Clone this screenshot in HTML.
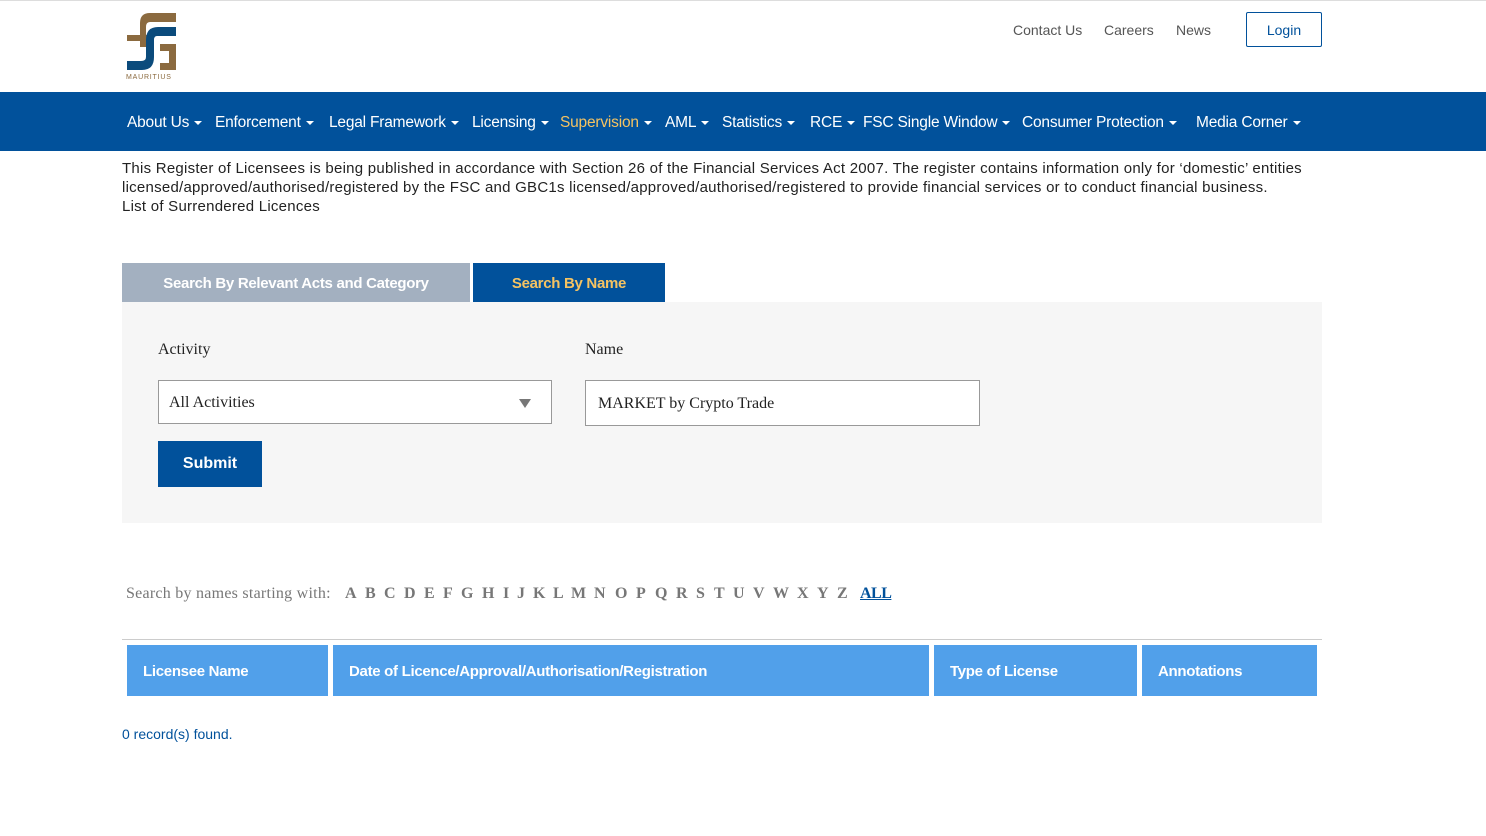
<!DOCTYPE html>
<html><head><meta charset="utf-8"><style>
*{box-sizing:border-box;margin:0;padding:0}
body{width:1486px;height:836px;background:#fff;font-family:"Liberation Sans",sans-serif;position:relative;overflow:hidden;color:#222}
.abs{position:absolute}
.top{border-top:1px solid #ddd;height:92px}
.tl{position:absolute;top:22px;font-size:14px;color:#555}
.nav{position:absolute;top:92px;left:0;width:1486px;height:59px;background:#01519b}
.nav span{position:absolute;top:22px;font-size:15.5px;color:#fff;white-space:nowrap;letter-spacing:-0.2px}
.nav span i{display:inline-block;width:0;height:0;border-left:4px solid transparent;border-right:4px solid transparent;border-top:4px solid #fff;margin-left:5px;vertical-align:middle}
.intro{left:122px;top:159px;font-size:15px;line-height:19px;color:#222;letter-spacing:0.25px}
.tab{position:absolute;top:263px;height:39px;color:#fff;font-weight:bold;font-size:15px;text-align:center;line-height:41px;letter-spacing:-0.3px}
.panel{left:122px;top:302px;width:1200px;height:221px;background:#f6f6f6}
.serif{font-family:"Liberation Serif",serif}
.th{position:absolute;top:645px;height:51px;background:#51a0ea;color:#fff;font-weight:bold;font-size:15px;line-height:53px;padding-left:16px;letter-spacing:-0.3px}
.lt{position:absolute;top:585px;font-size:16px;font-weight:bold;color:#777;font-family:"Liberation Serif",serif}
</style></head><body>
<div class="top"></div>
<svg class="abs" style="left:126px;top:13px" width="52" height="68" viewBox="0 0 52 68">
<path d="M14 0H50V9H24Q20 9 20 14V22H28V28H20V34H14V28H1V22H14V10Q14 0 24 0Z" fill="#8b6a3f"/>
<path d="M50 14V23H31Q28 23 28 27V44Q28 57 16 57H1V48H15Q20 48 20 44V27Q20 14 32 14Z" fill="#0b4b7c"/>
<path d="M34 31H50V57H34V50H43V38H34Z" fill="#8b6a3f"/>
<text x="0" y="66" font-size="7" fill="#8b6a3f" font-family="Liberation Sans" letter-spacing="0.8">MAURITIUS</text>
</svg>
<div class="tl" style="left:1013px">Contact Us</div>
<div class="tl" style="left:1104px">Careers</div>
<div class="tl" style="left:1176px">News</div>
<div class="abs" style="left:1246px;top:12px;width:76px;height:35px;border:1px solid #01519b;border-radius:2px;font-size:14px;color:#01519b;text-align:center;line-height:35px">Login</div>
<div class="nav">
<span style="left:127px">About Us<i></i></span>
<span style="left:215px">Enforcement<i></i></span>
<span style="left:329px">Legal Framework<i></i></span>
<span style="left:472px">Licensing<i></i></span>
<span style="left:560px;color:#f5c362">Supervision<i></i></span>
<span style="left:665px">AML<i></i></span>
<span style="left:722px">Statistics<i></i></span>
<span style="left:810px">RCE<i></i></span>
<span style="left:863px">FSC Single Window<i></i></span>
<span style="left:1022px">Consumer Protection<i></i></span>
<span style="left:1196px">Media Corner<i></i></span>
</div>
<div class="abs intro">This Register of Licensees is being published in accordance with Section 26 of the Financial Services Act 2007. The register contains information only for ‘domestic’ entities<br>licensed/approved/authorised/registered by the FSC and GBC1s licensed/approved/authorised/registered to provide financial services or to conduct financial business.<br>List of Surrendered Licences</div>
<div class="tab" style="left:122px;width:348px;background:#a3b0c0">Search By Relevant Acts and Category</div>
<div class="tab" style="left:473px;width:192px;background:#01519b;color:#f5c362">Search By Name</div>
<div class="abs panel"></div>
<div class="abs serif" style="left:158px;top:341px;font-size:16px">Activity</div>
<div class="abs serif" style="left:585px;top:341px;font-size:16px">Name</div>
<div class="abs serif" style="left:158px;top:380px;width:394px;height:44px;border:1px solid #999;background:#fff;font-size:16px;padding:13px 10px">All Activities
<div class="abs" style="right:20px;top:18px;border-left:6px solid transparent;border-right:6px solid transparent;border-top:9px solid #777"></div></div>
<div class="abs serif" style="left:585px;top:380px;width:395px;height:46px;border:1px solid #999;background:#fff;font-size:16px;padding:14px 12px">MARKET by Crypto Trade</div>
<div class="abs" style="left:158px;top:441px;width:104px;height:46px;background:#01519b;color:#fff;font-weight:bold;font-size:16px;text-align:center;line-height:46px">Submit</div>
<div class="abs serif" style="left:126px;top:585px;font-size:16px;color:#777;letter-spacing:0.25px">Search by names starting with:</div>
<div class="lt" style="left:345px">A</div><div class="lt" style="left:365px">B</div><div class="lt" style="left:384px">C</div><div class="lt" style="left:404px">D</div><div class="lt" style="left:424px">E</div><div class="lt" style="left:443px">F</div><div class="lt" style="left:461px">G</div><div class="lt" style="left:482px">H</div><div class="lt" style="left:503px">I</div><div class="lt" style="left:517px">J</div><div class="lt" style="left:533px">K</div><div class="lt" style="left:553px">L</div><div class="lt" style="left:571px">M</div><div class="lt" style="left:594px">N</div><div class="lt" style="left:615px">O</div><div class="lt" style="left:636px">P</div><div class="lt" style="left:655px">Q</div><div class="lt" style="left:676px">R</div><div class="lt" style="left:696px">S</div><div class="lt" style="left:714px">T</div><div class="lt" style="left:733px">U</div><div class="lt" style="left:753px">V</div><div class="lt" style="left:773px">W</div><div class="lt" style="left:797px">X</div><div class="lt" style="left:817px">Y</div><div class="lt" style="left:837px">Z</div>
<div class="lt" style="left:860px;color:#01519b;text-decoration:underline;letter-spacing:-0.5px">ALL</div>
<div class="abs" style="left:122px;top:639px;width:1200px;height:1px;background:#ccc"></div>
<div class="th" style="left:127px;width:201px">Licensee Name</div>
<div class="th" style="left:333px;width:596px">Date of Licence/Approval/Authorisation/Registration</div>
<div class="th" style="left:934px;width:203px">Type of License</div>
<div class="th" style="left:1142px;width:175px">Annotations</div>
<div class="abs" style="left:122px;top:726px;font-size:14px;color:#01519b">0 record(s) found.</div>
</body></html>
